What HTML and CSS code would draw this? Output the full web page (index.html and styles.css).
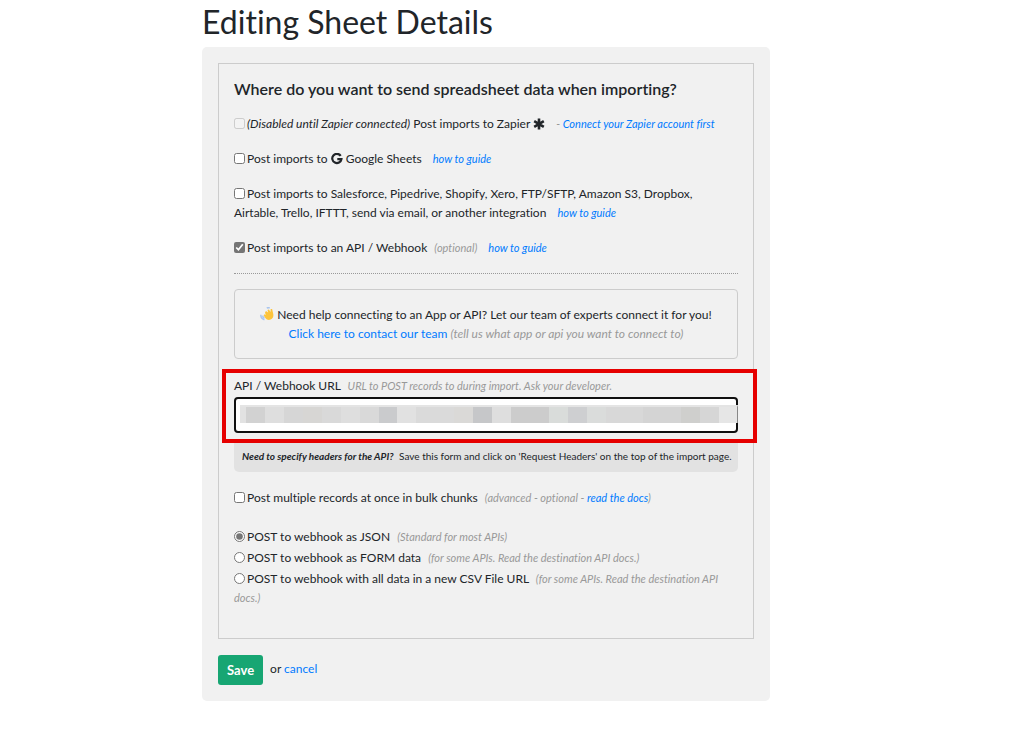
FILE: index.html
```html
<!DOCTYPE html>
<html lang="en">
<head>
<meta charset="utf-8">
<title>Editing Sheet Details</title>
<link rel="stylesheet" href="styles.css">
</head>
<body>
<main class="page">
  <h1 class="title">Editing Sheet Details</h1>
  <form class="card">
    <section class="panel">
      <h2 class="question">Where do you want to send spreadsheet data when importing?</h2>
      <p class="option"><input class="tick" type="checkbox" id="zapier" disabled><label for="zapier"><em>(Disabled until Zapier connected)</em> Post imports to Zapier
        <svg class="icon" viewBox="0 0 12 12" aria-hidden="true"><path d="M6 .6v10.800M1.200 3.200l9.600 5.600M10.800 3.200l-9.600 5.600" stroke="currentColor" stroke-width="2.600" fill="none"/></svg></label>
        <span class="hint wide">- <a href="#">Connect your Zapier account first</a></span></p>
      <p class="option"><input class="tick" type="checkbox" id="sheets"><label for="sheets">Post imports to
        <svg class="icon" viewBox="0 0 12 12" aria-hidden="true"><path d="M9.700 2.900A4.600 4.600 0 1 0 10.400 6.200H6.300" stroke="currentColor" stroke-width="2.200" fill="none"/></svg>
        Google Sheets</label> <a class="hint wide" href="#">how to guide</a></p>
      <p class="option"><input class="tick" type="checkbox" id="other"><label for="other">Post imports to Salesforce, Pipedrive, Shopify, Xero, FTP/SFTP, Amazon S3, Dropbox, Airtable, Trello, IFTTT, send via email, or another integration</label> <a class="hint wide" href="#">how to guide</a></p>
      <p class="option"><input class="tick" type="checkbox" id="api" checked><label for="api">Post imports to an API / Webhook</label> <span class="hint">(optional)</span> <a class="hint wide" href="#">how to guide</a></p>
      <hr class="rule">
      <div class="help">
        <svg class="wave" viewBox="0 0 14 14" aria-hidden="true"><path d="M5 5.600L6 4l2.200 1.600L7.500 3l1.400-.6 1.600 2.600.2-3 1.400-.1 1.200 5.200c.6 3-.8 5.200-3.400 5.700-2.300.4-4.100-.8-5.100-2.600L3.600 8.300l1-1.100 1.200.8z" fill="#fcc43c"/><path d="M.8 7.800c0 2.300 1.400 4.300 3.600 5M2.600 8.600c.2 1.200.9 2.100 1.900 2.700M6.800 1.200c.9-.7 2-.7 2.900-.2" stroke="#a9c5ee" stroke-width="1.500" fill="none"/></svg>
        Need help connecting to an App or API? Let our team of experts connect it for you!<br>
        <a href="#">Click here to contact our team</a> <em class="muted">(tell us what app or api you want to connect to)</em>
      </div>
      <div class="url-field">
        <label for="url">API / Webhook URL</label> <span class="hint">URL to POST records to during import. Ask your developer.</span>
        <div class="url-box">
          <input class="url-input" type="text" id="url">
          <div class="mask" aria-hidden="true"></div>
        </div>
      </div>
      <p class="note"><strong>Need to specify headers for the API?</strong> Save this form and click on 'Request Headers' on the top of the import page.</p>
      <p class="option bulk"><input class="tick" type="checkbox" id="bulk"><label for="bulk">Post multiple records at once in bulk chunks</label> <span class="hint">(advanced - optional - <a href="#">read the docs</a>)</span></p>
      <div class="formats">
        <p class="format"><input class="tick" type="radio" name="format" id="json" checked><label for="json">POST to webhook as JSON</label> <span class="hint">(Standard for most APIs)</span></p>
        <p class="format"><input class="tick" type="radio" name="format" id="form"><label for="form">POST to webhook as FORM data</label> <span class="hint">(for some APIs. Read the destination API docs.)</span></p>
        <p class="format"><input class="tick" type="radio" name="format" id="csv"><label for="csv">POST to webhook with all data in a new CSV File URL</label> <span class="hint">(for some APIs. Read the destination API docs.)</span></p>
      </div>
    </section>
    <div class="actions"><button class="save" type="button">Save</button><span>or <a href="#">cancel</a></span></div>
  </form>
</main>
</body>
</html>
```
FILE: styles.css
```css
* { box-sizing: border-box; }
body {
  margin: 0;
  background: #fff;
  color: #212529;
  font: 12px/19px Lato, "Open Sans", sans-serif;
  font-variant-ligatures: none;
}
a { color: #007bff; text-decoration: none; }
.page { padding: 3px 254px 28px 202px; }
.title { margin: 0 0 6px; font-size: 32px; font-weight: 400; line-height: 38px; }
.card { padding: 16px; border-radius: 5px; background: #f1f1f1; }
.panel { padding: 15px 15px 29px; border: 1px solid #ccc; }
.question { margin: 0 0 16px; font-size: 16px; line-height: 19px; font-weight: 600; }
.option { margin: 0 0 16px; }
.tick { width: 11px; height: 11px; margin: 0 2px 0 0; vertical-align: -1px; accent-color: #757575; }
.icon { width: 12px; height: 12px; vertical-align: -2px; }
.hint { margin-left: 4px; color: #999; font-size: 11px; font-style: italic; }
a.hint { color: #007bff; }
.wide { margin-left: 8px; }
.muted { color: #999; }
.rule { margin: 0 0 15px; border: 0; border-top: 1px dotted #999; }
.help { margin-bottom: 10px; padding: 15px; border: 1px solid #ccc; border-radius: 4px; text-align: center; }
.wave { width: 14px; height: 14px; vertical-align: -2px; }
.url-field { margin: 0 -19px 0 -12px; padding: 3px 15px 6px 8px; border: 4px solid #e60000; }
.url-box { position: relative; margin-top: 2px; }
.url-input { display: block; width: 100%; height: 36px; border: 2px solid #101010; border-radius: 4px; background: #fff; }
.mask {
  position: absolute;
  top: 8px;
  left: 6px;
  right: 0;
  height: 18px;
  border-top: 2px solid #e4e4e4;
  border-right: 1px solid #888;
  background: linear-gradient(90deg,
    #e2e2e2 6px, #d2d2d2 6px 25px, #dedede 25px 44px, #d6d6d6 44px 63px,
    #d7d6d4 63px 82px, #d9d9d9 82px 101px, #dedede 101px 120px, #d9d9d9 120px 139px,
    #cacbcd 139px 157px, #e1e1e1 157px 176px, #dadada 176px 214px, #dad9d7 214px 233px,
    #c6c7c9 233px 252px, #dedede 252px 271px, #cccccc 271px 309px, #d9dcda 309px 328px,
    #cecfd1 328px 347px, #dadcdb 347px 366px, #d8d8d8 366px 403px, #d4d4d4 403px 441px,
    #cfcfcd 441px 460px, #d6d6d6 460px 479px, #e6e6e6 479px);
}
.note { margin: 0 0 16px; padding: 4px 3px 6px 8px; border-radius: 0 0 5px 5px; background: #e2e2e2; font-size: 10px; }
.note strong { margin-right: 3px; font-style: italic; }
.bulk { margin-bottom: 20px; }
.format { margin: 0 0 2px; }
.actions { display: flex; gap: 7px; margin-top: 16px; }
.actions span { padding-top: 4px; }
.save { padding: 6px 9px; border: 0; border-radius: 3px; background: #17a673; color: #fff; font: 700 13px/18px Lato, sans-serif; }
```
